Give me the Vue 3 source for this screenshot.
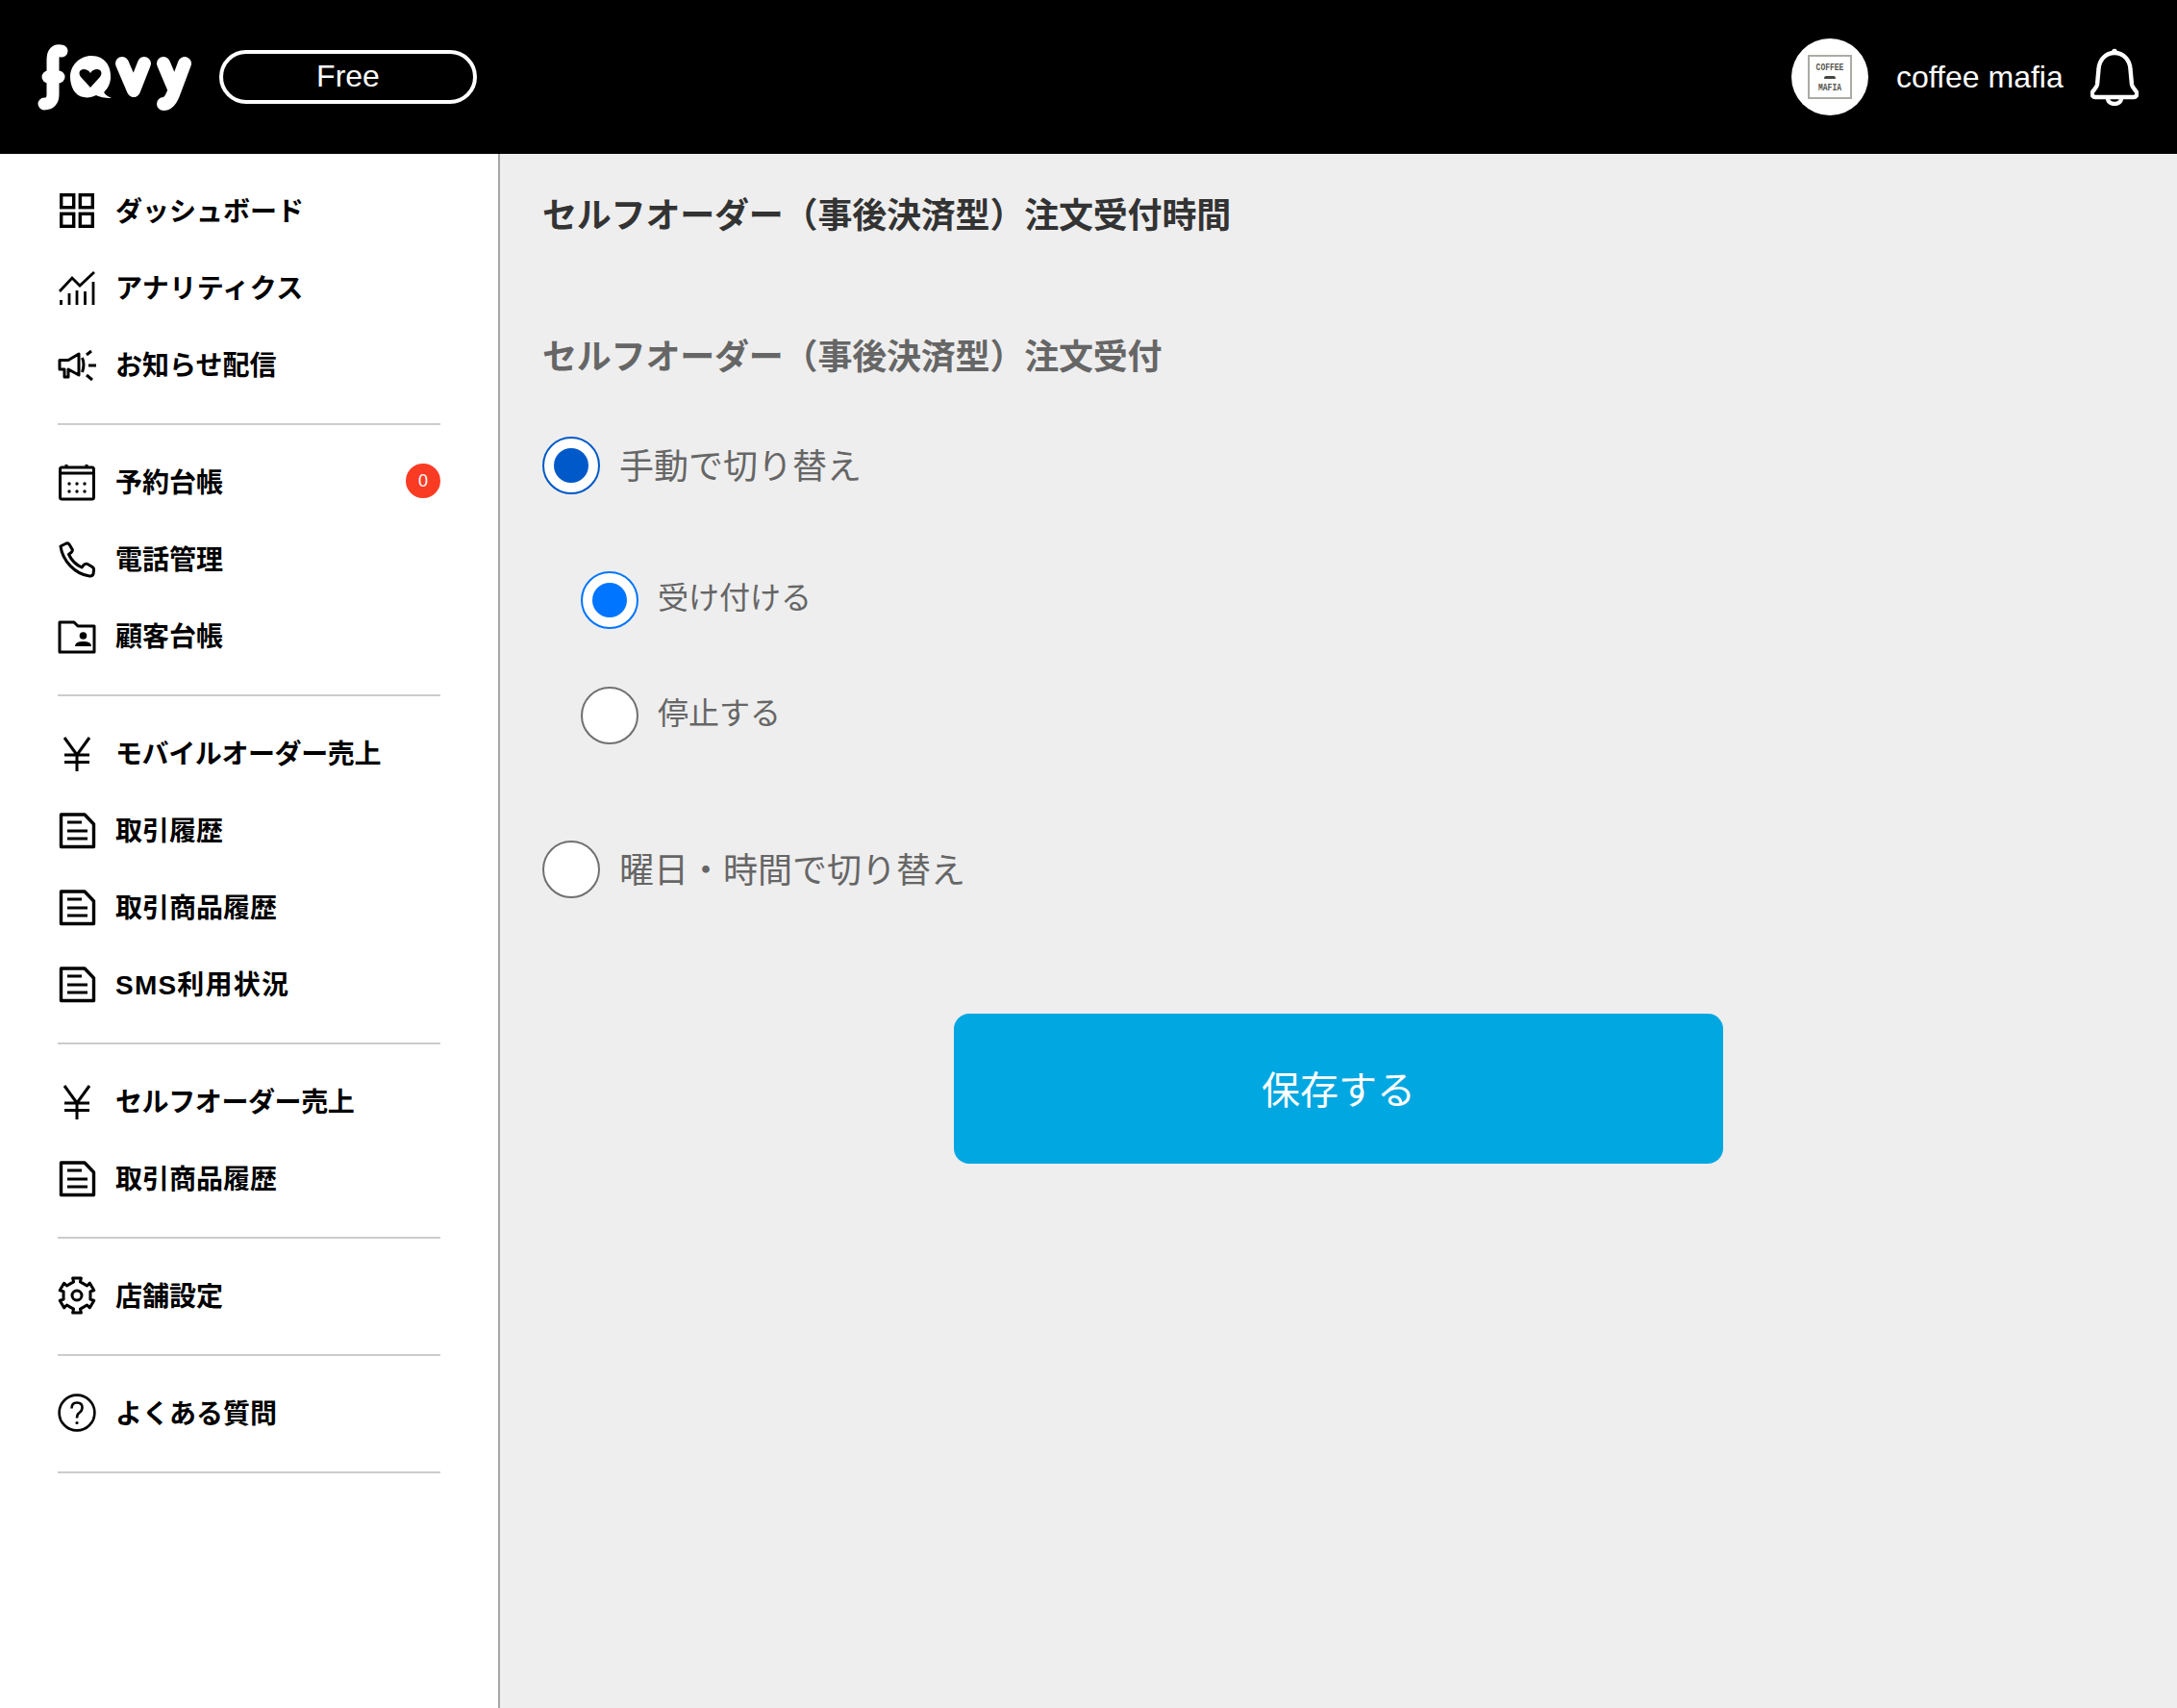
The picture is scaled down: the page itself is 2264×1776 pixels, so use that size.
<template>
  <div class="page">
    <header class="topbar">
      <svg class="logo" viewBox="0 20 200 120" aria-label="favy">
        <g fill="none" stroke="#fff" stroke-width="13" stroke-linecap="round" stroke-linejoin="round">
          <path d="M64 53 Q55 51 55 62 V98 Q55 108 46 108" />
          <path d="M50 80 H61" />
          <path d="M127 66 L139 94 L150 66" stroke-width="14" />
          <path d="M170 66 L181 92" stroke-width="14" />
          <path d="M192 66 L180 98 Q176 108 170 108" stroke-width="14" />
        </g>
        <path
          fill="#fff"
          fill-rule="evenodd"
          d="M95 58 C110 58 116 70 115 82 C114 90 110 94 108 96 C110 99 112 100 116 102 C108 102 104 101 100 99 C96 101 91 102 87 101 C78 100 73 90 73 80 C73 68 83 58 95 58 Z M94 91 L104 80 C107 76 105 72 101 72 C98 72 96 73 94 76 C92 73 90 72 87 72 C83 72 81 76 84 80 Z"
        />
      </svg>
      <div class="plan">Free</div>
      <div class="spacer"></div>
      <div class="avatar">
        <div class="avatar-mark">
          <span>COFFEE</span>
          <i class="stache"></i>
          <span>MAFIA</span>
        </div>
      </div>
      <span class="shop-name">coffee mafia</span>
      <svg class="bell" viewBox="0 0 50 60">
        <g fill="none" stroke="#fff" stroke-width="4.4" stroke-linejoin="round">
          <path d="M25 5 C34 5 41 12 41.5 22 L43 38 C43.5 41 47 44 48 46 C49 49 47 51 45 51 H5 C3 51 1 49 2 46 C3 44 6.5 41 7 38 L8.5 22 C9 12 16 5 25 5 Z" />
          <path d="M18 52 C18 60 32 60 32 52" />
        </g>
        <circle cx="25" cy="3.5" r="2.8" fill="#fff" />
      </svg>
    </header>

    <div class="body">
      <aside class="sidebar">
        <nav v-for="(section, i) in sections" :key="i" class="nav-section">
          <a v-for="item in section" :key="item.label" class="nav-item">
            <svg class="nav-icon" viewBox="0 0 40 40">
              <g v-if="item.icon === 'grid'" fill="none" stroke="#000" stroke-width="3.4">
                <rect x="3.7" y="3.7" width="13" height="13" />
                <rect x="23.3" y="3.7" width="13" height="13" />
                <rect x="3.7" y="23.3" width="13" height="13" />
                <rect x="23.3" y="23.3" width="13" height="13" />
              </g>
              <g v-else-if="item.icon === 'chart'" fill="none" stroke="#000" stroke-width="2.8">
                <path d="M2 24 L15 10 L23 18 L38 4" />
                <path d="M3.5 38 V33 M12 38 V26 M20 38 V23 M28.5 38 V24 M37 38 V14" />
              </g>
              <g v-else-if="item.icon === 'speaker'" fill="none" stroke="#000" stroke-width="3">
                <path d="M2 15.5 H11 L22 9 V31 L11 25 V33 H7 V25 H2 Z" stroke-linejoin="round" />
                <path d="M25.5 13 Q28.5 20 25.5 28" />
                <path d="M30 10 L35 6 M32 21 H40 M30 31 L36 36" />
              </g>
              <g v-else-if="item.icon === 'calendar'">
                <g fill="none" stroke="#000" stroke-width="3">
                  <rect x="2.5" y="5" width="35" height="33" rx="2" />
                  <path d="M2.5 11 H37.5 M9 2 V5 M30 2 V5" />
                </g>
                <g fill="#000">
                  <circle v-for="d in calendarDots" :key="d[0] + '-' + d[1]" :cx="d[0]" :cy="d[1]" r="1.7" />
                </g>
              </g>
              <path
                v-else-if="item.icon === 'phone'"
                fill="none"
                stroke="#000"
                stroke-width="3"
                stroke-linejoin="round"
                d="M3 7 L9 4 Q11 3.5 12 5 L15 10 Q16 12 14 13.5 L11.5 15.5 Q16 25 25 29 L27 26.5 Q29 24.5 31 25.5 L36 28.5 Q38 30 37.5 32 L37 36 Q36 38.5 33 38 C18 36 5 22 3 7 Z"
              />
              <g v-else-if="item.icon === 'folder'">
                <path d="M2 6 H17 L21 10 H38 V37 H2 Z" fill="none" stroke="#000" stroke-width="3" stroke-linejoin="round" />
                <circle cx="26.5" cy="20" r="3.8" fill="#000" />
                <path d="M18 31 Q18 26 26.5 26 Q35 26 35 31 Z" fill="#000" />
              </g>
              <g v-else-if="item.icon === 'yen'" fill="none" stroke="#000" stroke-width="3">
                <path d="M7 4 L20 22 L33 4 M20 22 V39 M7 22 H33 M7 29.5 H33" />
              </g>
              <g v-else-if="item.icon === 'doc'" fill="none" stroke="#000" stroke-width="3.4" stroke-linejoin="round">
                <path d="M3.5 4 H28 L37.5 14 V37.5 H3.5 Z" />
                <path d="M10 12 H25 M10 21 H31 M10 29 H31" stroke-width="3" />
              </g>
              <g v-else-if="item.icon === 'gear'" fill="none" stroke="#000" stroke-width="3" stroke-linejoin="round">
                <path :d="gearPath" />
                <circle cx="20" cy="20" r="5" />
              </g>
              <g v-else-if="item.icon === 'help'" fill="none" stroke="#000" stroke-width="2.6">
                <circle cx="20" cy="20" r="18.4" />
                <path d="M14.5 15.5 Q14.5 9.5 20 9.5 Q25.5 9.5 25.5 14.5 Q25.5 18 22.5 20 Q20 21.5 20 25.5" />
                <circle cx="20" cy="30.5" r="1.6" fill="#000" stroke="none" />
              </g>
            </svg>
            <span class="nav-label" :class="item.fit">{{ item.label }}</span>
            <span v-if="item.badge !== undefined" class="badge">{{ item.badge }}</span>
          </a>
        </nav>
      </aside>

      <main class="content">
        <h1 class="title">セルフオーダー（事後決済型）注文受付時間</h1>
        <h2 class="subtitle">セルフオーダー（事後決済型）注文受付</h2>

        <div class="option first">
          <span class="radio checked-dark"></span>
          <span class="option-label">手動で切り替え</span>
        </div>
        <div class="option sub first-sub">
          <span class="radio checked"></span>
          <span class="option-label">受け付ける</span>
        </div>
        <div class="option sub second-sub">
          <span class="radio"></span>
          <span class="option-label">停止する</span>
        </div>
        <div class="option schedule">
          <span class="radio"></span>
          <span class="option-label">曜日・時間で切り替え</span>
        </div>

        <button class="save" type="button"><span>保存する</span></button>
      </main>
    </div>
  </div>
</template>

<script setup>
const sections = [
  [
    { icon: 'grid', label: 'ダッシュボード' },
    { icon: 'chart', label: 'アナリティクス', fit: 'wide' },
    { icon: 'speaker', label: 'お知らせ配信' },
  ],
  [
    { icon: 'calendar', label: '予約台帳', badge: 0 },
    { icon: 'phone', label: '電話管理' },
    { icon: 'folder', label: '顧客台帳' },
  ],
  [
    { icon: 'yen', label: 'モバイルオーダー売上', fit: 'tight' },
    { icon: 'doc', label: '取引履歴' },
    { icon: 'doc', label: '取引商品履歴' },
    { icon: 'doc', label: 'SMS利用状況', fit: 'sms' },
  ],
  [
    { icon: 'yen', label: 'セルフオーダー売上', fit: 'tight' },
    { icon: 'doc', label: '取引商品履歴' },
  ],
  [{ icon: 'gear', label: '店舗設定' }],
  [{ icon: 'help', label: 'よくある質問' }],
]

const calendarDots = [
  [12, 22], [20, 22], [28, 22],
  [12, 30], [20, 30], [28, 30],
]

// six-tooth cog outline
function makeGear() {
  const pts = []
  for (let i = 0; i < 6; i++) {
    const a = (i * Math.PI) / 3 - Math.PI / 2
    const step = 0.24
    ;[[-0.52, 14], [-step, 14.5], [-step, 18.5], [step, 18.5], [step, 14.5]].forEach(([d, r]) => {
      pts.push([20 + r * Math.cos(a + d), 20 + r * Math.sin(a + d)])
    })
  }
  return 'M' + pts.map((p) => p[0].toFixed(1) + ' ' + p[1].toFixed(1)).join(' L') + ' Z'
}

const gearPath = makeGear()
</script>

<style scoped>
.page {
  width: 2264px;
  height: 1776px;
  display: flex;
  flex-direction: column;
  overflow: hidden;
  font-family: "Liberation Sans", "Noto Sans CJK JP", sans-serif;
}

.topbar {
  height: 160px;
  flex-shrink: 0;
  background: #000;
  color: #fff;
  display: flex;
  align-items: center;
  padding: 0 40px 0 0;
  box-sizing: border-box;
}

.logo {
  width: 200px;
  height: 120px;
}

.plan {
  width: 268px;
  height: 56px;
  margin-left: 28px;
  box-sizing: border-box;
  border: 4px solid #fff;
  border-radius: 28px;
  font-size: 32px;
  line-height: 46px;
  text-align: center;
}

.spacer {
  flex: 1;
}

.avatar {
  width: 80px;
  height: 80px;
  border-radius: 50%;
  background: #fff;
  display: flex;
  align-items: center;
  justify-content: center;
}

.avatar-mark {
  width: 46px;
  height: 46px;
  box-sizing: border-box;
  border: 2px solid #a9aba5;
  display: flex;
  flex-direction: column;
  align-items: center;
  justify-content: space-around;
  padding: 4px 0;
  font-family: "Liberation Mono", monospace;
  font-size: 8px;
  font-weight: 700;
  line-height: 8px;
  color: #55564f;
}

.avatar-mark span {
  transform: scaleY(1.3);
}

.stache {
  width: 12px;
  height: 3px;
  background: #45463f;
  border-radius: 3px 3px 1px 1px;
}

.shop-name {
  width: 172px;
  margin-left: 29px;
  font-size: 32px;
  white-space: nowrap;
}

.bell {
  width: 50px;
  height: 60px;
  margin-left: 30px;
}

.body {
  flex: 1;
  display: flex;
  min-height: 0;
}

.sidebar {
  width: 520px;
  flex-shrink: 0;
  box-sizing: border-box;
  background: #fff;
  border-right: 2px solid #a6a6a6;
  padding: 19px 60px 0;
}

.nav-section {
  padding-bottom: 21px;
  margin-bottom: 19px;
  border-bottom: 2px solid #cccccc;
  width: 398px;
}

.nav-item {
  height: 80px;
  display: flex;
  align-items: center;
  color: #000;
}

.nav-icon {
  width: 40px;
  height: 40px;
  flex-shrink: 0;
}

.nav-label {
  margin-left: 20px;
  margin-bottom: 2px;
  font-size: 28px;
  font-weight: 700;
  white-space: nowrap;
}

.nav-label.tight {
  letter-spacing: -0.4px;
}

.nav-label.wide {
  letter-spacing: 0.4px;
}

.nav-label.sms {
  letter-spacing: 1.2px;
}

.badge {
  margin-left: auto;
  margin-bottom: 2px;
  width: 36px;
  height: 36px;
  border-radius: 50%;
  background: #fa3b24;
  color: #fff;
  font-size: 18px;
  line-height: 36px;
  text-align: center;
}

.content {
  flex: 1;
  background: #eeeeee;
  padding: 39px 44px 0;
  display: flex;
  flex-direction: column;
  min-width: 0;
}

.title,
.subtitle {
  margin: 0;
  font-size: 36px;
  line-height: 52px;
  font-weight: 700;
  letter-spacing: -0.2px;
}

.title {
  color: #333;
}

.subtitle {
  margin-top: 95px;
  color: #666;
}

.option {
  height: 60px;
  display: flex;
  align-items: center;
  gap: 20px;
}

.option-label {
  font-size: 36px;
  margin-bottom: 4px;
  color: #666;
  white-space: nowrap;
}

.option.first {
  margin-top: 56px;
}

.option.sub {
  margin-left: 40px;
}

.option.sub .option-label {
  font-size: 32px;
  margin-bottom: 10px;
}

.first-sub {
  margin-top: 80px;
}

.second-sub {
  margin-top: 60px;
}

.schedule {
  margin-top: 100px;
}

.radio {
  width: 60px;
  height: 60px;
  flex-shrink: 0;
  box-sizing: border-box;
  border: 2px solid #707070;
  border-radius: 50%;
  background: #fff;
  display: flex;
  align-items: center;
  justify-content: center;
}

.radio.checked-dark,
.radio.checked {
  border-color: var(--radio);
}

.radio.checked-dark {
  --radio: #0059c8;
}

.radio.checked {
  --radio: #0075ff;
}

.radio.checked-dark::after,
.radio.checked::after {
  content: "";
  width: 36px;
  height: 36px;
  border-radius: 50%;
  background: var(--radio);
}

.save {
  align-self: center;
  width: 800px;
  height: 156px;
  margin-top: 120px;
  padding-bottom: 4px;
  border: none;
  border-radius: 16px;
  background: #00a7e1;
  color: #fff;
  font-family: inherit;
  font-size: 40px;
}
</style>
